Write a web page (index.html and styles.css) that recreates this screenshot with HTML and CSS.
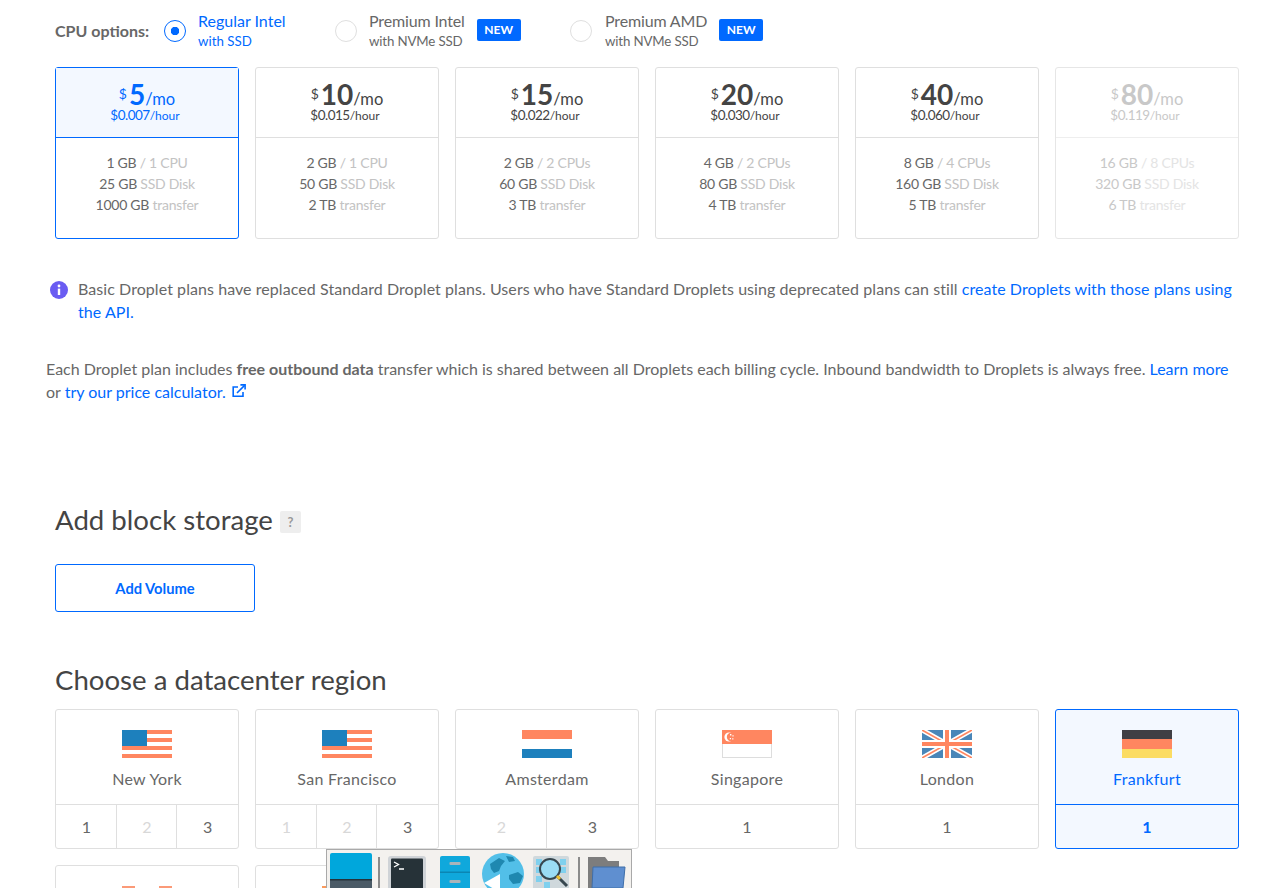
FILE: index.html
```html
<!DOCTYPE html>
<html>
<head>
    <title>Create Droplet</title>
    <link rel="stylesheet" href="styles.css">
</head>
<body>
    <div class="page">
        <div class="cpu-row">
            <span class="cpu-label">CPU options:</span>
            <div class="cpu-option cpu-regular selected">
                <span class="radio"></span>
                <span class="cpu-text">Regular Intel<small>with SSD</small></span>
            </div>
            <div class="cpu-option cpu-intel">
                <span class="radio"></span>
                <span class="cpu-text">Premium Intel<small>with NVMe SSD</small></span>
                <span class="badge-new">NEW</span>
            </div>
            <div class="cpu-option cpu-amd">
                <span class="radio"></span>
                <span class="cpu-text">Premium AMD<small>with NVMe SSD</small></span>
                <span class="badge-new">NEW</span>
            </div>
        </div>

        <div class="card-grid">
            <div class="plan selected">
                <div class="plan-price">
                    <div class="price"><sup>$</sup><b>5</b>/mo</div>
                    <div class="hourly">$0.007<small>/hour</small></div>
                </div>
                <div class="plan-specs">
                    <div>1 GB <i>/ 1 CPU</i></div>
                    <div>25 GB <i>SSD Disk</i></div>
                    <div>1000 GB <i>transfer</i></div>
                </div>
            </div>
            <div class="plan">
                <div class="plan-price">
                    <div class="price"><sup>$</sup><b>10</b>/mo</div>
                    <div class="hourly">$0.015<small>/hour</small></div>
                </div>
                <div class="plan-specs">
                    <div>2 GB <i>/ 1 CPU</i></div>
                    <div>50 GB <i>SSD Disk</i></div>
                    <div>2 TB <i>transfer</i></div>
                </div>
            </div>
            <div class="plan">
                <div class="plan-price">
                    <div class="price"><sup>$</sup><b>15</b>/mo</div>
                    <div class="hourly">$0.022<small>/hour</small></div>
                </div>
                <div class="plan-specs">
                    <div>2 GB <i>/ 2 CPUs</i></div>
                    <div>60 GB <i>SSD Disk</i></div>
                    <div>3 TB <i>transfer</i></div>
                </div>
            </div>
            <div class="plan">
                <div class="plan-price">
                    <div class="price"><sup>$</sup><b>20</b>/mo</div>
                    <div class="hourly">$0.030<small>/hour</small></div>
                </div>
                <div class="plan-specs">
                    <div>4 GB <i>/ 2 CPUs</i></div>
                    <div>80 GB <i>SSD Disk</i></div>
                    <div>4 TB <i>transfer</i></div>
                </div>
            </div>
            <div class="plan">
                <div class="plan-price">
                    <div class="price"><sup>$</sup><b>40</b>/mo</div>
                    <div class="hourly">$0.060<small>/hour</small></div>
                </div>
                <div class="plan-specs">
                    <div>8 GB <i>/ 4 CPUs</i></div>
                    <div>160 GB <i>SSD Disk</i></div>
                    <div>5 TB <i>transfer</i></div>
                </div>
            </div>
            <div class="plan disabled">
                <div class="plan-price">
                    <div class="price"><sup>$</sup><b>80</b>/mo</div>
                    <div class="hourly">$0.119<small>/hour</small></div>
                </div>
                <div class="plan-specs">
                    <div>16 GB <i>/ 8 CPUs</i></div>
                    <div>320 GB <i>SSD Disk</i></div>
                    <div>6 TB <i>transfer</i></div>
                </div>
            </div>
        </div>

        <div class="notice">
            <svg class="info-icon" viewBox="0 0 18 18" width="18" height="18">
                <circle cx="9" cy="9" r="9" fill="#6a5cf2"/>
                <circle cx="9" cy="5" r="1.4" fill="#fff"/>
                <rect x="7.8" y="7.6" width="2.4" height="6.4" fill="#fff"/>
            </svg>
            <p>Basic Droplet plans have replaced Standard Droplet plans. Users who have Standard Droplets using deprecated plans can still <a href="#">create Droplets with those plans using the API.</a></p>
        </div>

        <p class="note">Each Droplet plan includes <b>free outbound data</b> transfer which is shared between all Droplets each billing cycle. Inbound bandwidth to Droplets is always free. <a href="#">Learn more</a> or <a href="#">try our price calculator.</a>
            <svg class="ext-icon" viewBox="0 0 14 14" width="14" height="14" fill="none" stroke="#0069ff" stroke-width="1.6">
                <path d="M11 8v4.2H1.2V3H6"/>
                <path d="M5 9l7.6-7.6"/>
                <path d="M8.4 .9h4.7v4.7"/>
            </svg>
        </p>

        <h2 class="section-title storage-title">Add block storage <span class="help">?</span></h2>
        <button class="add-volume">Add Volume</button>

        <h2 class="section-title region-title">Choose a datacenter region</h2>
        <div class="card-grid regions">
            <div class="region">
                <div class="region-name">
                    <svg class="flag" viewBox="0 0 50 28">
                        <path fill="#ff8660" d="M0 0h50v4H0zM0 8h50v4H0zM0 16h50v4H0zM0 24h50v4H0z"/>
                        <rect width="25" height="16" fill="#1d80bd"/>
                    </svg>
                    New York
                </div>
                <div class="region-nums"><span>1</span><span class="off">2</span><span>3</span></div>
            </div>
            <div class="region">
                <div class="region-name">
                    <svg class="flag" viewBox="0 0 50 28">
                        <path fill="#ff8660" d="M0 0h50v4H0zM0 8h50v4H0zM0 16h50v4H0zM0 24h50v4H0z"/>
                        <rect width="25" height="16" fill="#1d80bd"/>
                    </svg>
                    San Francisco
                </div>
                <div class="region-nums"><span class="off">1</span><span class="off">2</span><span>3</span></div>
            </div>
            <div class="region">
                <div class="region-name">
                    <svg class="flag" viewBox="0 0 50 28">
                        <rect width="50" height="9" fill="#ff8660"/>
                        <rect y="19" width="50" height="9" fill="#1d80bd"/>
                    </svg>
                    Amsterdam
                </div>
                <div class="region-nums"><span class="off">2</span><span>3</span></div>
            </div>
            <div class="region">
                <div class="region-name">
                    <svg class="flag" viewBox="0 0 50 28">
                        <rect x=".5" y=".5" width="49" height="27" fill="#fff" stroke="#ddd"/>
                        <rect width="50" height="14" fill="#ff8660"/>
                        <circle cx="7" cy="7" r="4.6" fill="#fff"/>
                        <circle cx="9" cy="7" r="4.2" fill="#ff8660"/>
                        <path fill="#fff" d="M8 4h1.4v1.4H8zM10.400 5.200h1.200v1.200h-1.200zM7.800 8h1.200v1.200H7.800zM10.200 8.200h1.200v1.200h-1.200z"/>
                    </svg>
                    Singapore
                </div>
                <div class="region-nums"><span>1</span></div>
            </div>
            <div class="region">
                <div class="region-name">
                    <svg class="flag" viewBox="0 0 50 28">
                        <rect width="50" height="28" fill="#4a86b8"/>
                        <path stroke="#fff" stroke-width="5" d="M0 0l50 28M50 0L0 28"/>
                        <path stroke="#ff8660" stroke-width="1.600" d="M0 0l50 28M50 0L0 28"/>
                        <path stroke="#fff" stroke-width="8" d="M25 0v28M0 14h50"/>
                        <path stroke="#ff8660" stroke-width="4" d="M25 0v28M0 14h50"/>
                    </svg>
                    London
                </div>
                <div class="region-nums"><span>1</span></div>
            </div>
            <div class="region selected">
                <div class="region-name">
                    <svg class="flag" viewBox="0 0 50 28">
                        <rect width="50" height="9" fill="#403f44"/>
                        <rect y="9" width="50" height="10" fill="#ff8660"/>
                        <rect y="19" width="50" height="9" fill="#fbdc63"/>
                    </svg>
                    Frankfurt
                </div>
                <div class="region-nums"><span>1</span></div>
            </div>
            <div class="region">
                <div class="region-name">
                    <svg class="flag" viewBox="0 0 50 28">
                        <rect width="13" height="28" fill="#fb9a78"/>
                        <rect x="37" width="13" height="28" fill="#fb9a78"/>
                    </svg>
                </div>
            </div>
            <div class="region">
                <div class="region-name">
                    <svg class="flag" viewBox="0 0 50 28">
                        <rect width="50" height="9" fill="#fb9a5c"/>
                    </svg>
                </div>
            </div>
        </div>
    </div>

    <div class="dock">
        <svg class="dock-panel" width="42" height="36" viewBox="0 0 42 36">
            <rect width="42" height="36" rx="2" fill="#00a7dc"/>
            <rect y="27" width="42" height="9" fill="#4b5b67"/>
            <rect y="26" width="42" height="1.500" fill="#26323a"/>
        </svg>
        <span class="dock-sep sep-one"></span>
        <svg class="dock-term" width="38" height="34" viewBox="0 0 38 34">
            <rect width="38" height="34" rx="3" fill="#cfd3d7"/>
            <rect x="3" y="2.500" width="32" height="31" rx="1" fill="#263238"/>
            <path d="M6 6l4.500 2.500L6 11M11 13h5" fill="none" stroke="#fff" stroke-width="1.300"/>
        </svg>
        <svg class="dock-files" width="30" height="34" viewBox="0 0 30 34">
            <rect width="30" height="34" rx="2" fill="#0fa8dc"/>
            <rect y="15.500" width="30" height="1.500" fill="#0b86b3"/>
            <rect x="9.500" y="6" width="11" height="3" rx="1" fill="#a9b4ba"/>
            <rect x="9.500" y="24" width="11" height="3" rx="1" fill="#a9b4ba"/>
        </svg>
        <svg class="dock-globe" width="42" height="36" viewBox="0 0 42 36">
            <circle cx="21" cy="21" r="21" fill="#52bfe8"/>
            <path fill="#1f88b0" d="M8 11l9-6 6 3-4 5-2 5-5 2-3-4zM27 22l9-3 5 4-3 7-7 1-4-5zM24 3l7 1 2 4-6 1z"/>
            <path fill="#fff" d="M2 30l16-9v15h-6z"/>
        </svg>
        <svg class="dock-search" width="36" height="34" viewBox="0 0 36 34">
            <rect width="36" height="34" rx="2" fill="#cfd8dc"/>
            <path fill="#7fd0ee" d="M3 3h6v6H3zM27 3h6v6h-6zM27 11h6v6h-6zM3 11h6v6H3zM3 20h6v6H3zM11 26h6v6h-6z"/>
            <circle cx="17" cy="13" r="10" fill="#9adcf4" stroke="#37474f" stroke-width="2"/>
            <path d="M24 20l10 10" stroke="#37474f" stroke-width="3"/>
            <path d="M24 20l3 3" stroke="#f0c330" stroke-width="3"/>
        </svg>
        <span class="dock-sep sep-two"></span>
        <svg class="dock-folder" width="39" height="32" viewBox="0 0 39 32">
            <path fill="#7d7d7d" d="M1 1h17l3 4h11v27H1z"/>
            <path fill="#5f8fd0" stroke="#3f6ea8" d="M6 11h32l-2 21H5z"/>
        </svg>
    </div>
</body>
</html>
```

FILE: styles.css
```css
html {
    overflow: hidden;
}
body {
    font-family: "Lato", sans-serif;
    font-size: 16px;
    color: #676767;
    margin: 0;
    height: 888px;
    overflow: hidden;
    background-color: white;
}
a {
    color: #0069ff;
    text-decoration: none;
}
.page {
    height: 878px;
    overflow: hidden;
    padding: 10px 26px 0 55px;
}

/* cpu options */
.cpu-row {
    display: flex;
    align-items: center;
    height: 42px;
    margin-bottom: 15px;
}
.cpu-label {
    font-size: 16px;
    font-weight: 700;
    width: 109px;
    margin-top: -2px;
}
.cpu-option {
    display: flex;
    align-items: center;
}
.cpu-regular {
    width: 171px;
}
.cpu-intel {
    width: 235px;
}
.radio {
    width: 22px;
    height: 22px;
    box-sizing: border-box;
    border: 1px solid #dfdfdf;
    border-radius: 50%;
    margin-right: 12px;
}
.cpu-amd .radio {
    margin-right: 13px;
}
.cpu-option.selected .radio {
    border-color: #0069ff;
    background: radial-gradient(circle, #0069ff 0 4px, white 4.5px);
}
.cpu-text {
    font-size: 16px;
    line-height: 20px;
    white-space: nowrap;
}
.cpu-intel .cpu-text,
.cpu-amd .cpu-text {
    letter-spacing: -0.15px;
}
.cpu-text small {
    display: block;
    font-size: 13.3px;
}
.cpu-option.selected .cpu-text {
    color: #0069ff;
}
.badge-new {
    background-color: #0069ff;
    color: white;
    font-size: 12px;
    font-weight: 700;
    line-height: 22px;
    padding: 0 7.5px;
    border-radius: 2px;
    margin-left: 12px;
    margin-top: -2px;
}

/* plan and region cards */
.card-grid {
    display: grid;
    grid-template-columns: repeat(6, 184px);
    gap: 16px;
}
.plan {
    height: 172px;
    box-sizing: border-box;
    border: 1px solid #dfdfdf;
    border-radius: 3px;
    text-align: center;
}
.plan-price {
    height: 70px;
    box-sizing: border-box;
    padding-top: 23px;
    border-bottom: 1px solid #dfdfdf;
    color: #444;
}
.price {
    font-size: 16.5px;
    line-height: 16px;
}
.price sup {
    font-size: 14px;
    line-height: 0;
    margin-right: 2px;
    vertical-align: 6px;
}
.price b {
    font-size: 28px;
    font-weight: 700;
    line-height: 0;
}
.hourly {
    font-size: 13.5px;
    line-height: 16px;
    letter-spacing: -0.5px;
    padding-right: 4px;
}
.hourly small {
    font-size: 12px;
    letter-spacing: 0;
}
.plan-specs {
    padding-top: 14px;
    font-size: 14px;
    line-height: 21px;
    letter-spacing: -0.25px;
}
.plan-specs i {
    font-style: normal;
    color: #c3c3c3;
}
.plan.selected {
    border-color: #0069ff;
}
.plan.selected .plan-price {
    background-color: #f3f8ff;
    border-bottom-color: #0069ff;
    color: #0069ff;
}
.plan.disabled .plan-price,
.plan.disabled .plan-specs {
    color: #c8c8c8;
}
.plan.disabled .plan-specs i {
    color: #e4e4e4;
}
.plan.disabled {
    border-color: #e6e6e6;
}
.plan.disabled .plan-price {
    border-bottom-color: #eee;
}

/* text blocks */
.notice {
    display: flex;
    margin: 38px 0 0 -5px;
}
.info-icon {
    flex: none;
    margin: 4px 10px 0 0;
}
.notice p {
    margin: 0;
    line-height: 23px;
    letter-spacing: 0.065px;
}
.note {
    margin: 34px 0 0 -9px;
    line-height: 23px;
}
.note b {
    font-weight: 700;
}
.ext-icon {
    margin-left: 2px;
    vertical-align: 0;
}

/* sections */
.section-title {
    font-size: 27.6px;
    font-weight: 400;
    line-height: 34px;
    color: #444;
    margin: 0;
}
.storage-title {
    display: flex;
    align-items: center;
    gap: 7px;
    margin-top: 100px;
}
.help {
    width: 21px;
    height: 22px;
    margin-top: 3px;
    background-color: #eee;
    border-radius: 2px;
    color: #999;
    font-size: 13px;
    font-weight: 700;
    line-height: 22px;
    text-align: center;
}
.add-volume {
    display: block;
    width: 200px;
    height: 48px;
    margin-top: 27px;
    border: 1px solid #0069ff;
    border-radius: 3px;
    background-color: white;
    color: #0069ff;
    font-family: inherit;
    font-size: 14.7px;
    font-weight: 700;
}
.region-title {
    margin: 51px 0 12px;
}
.region {
    box-sizing: border-box;
    height: 140px;
    border: 1px solid #dfdfdf;
    border-radius: 3px;
    text-align: center;
}
.region-name {
    height: 94px;
    box-sizing: border-box;
    padding-top: 20px;
    line-height: 24px;
    letter-spacing: 0.3px;
}
.flag {
    display: block;
    width: 50px;
    height: 28px;
    margin: 0 auto 9px;
}
.region-nums {
    display: flex;
    height: 44px;
    border-top: 1px solid #dfdfdf;
    box-sizing: border-box;
}
.region-nums span {
    flex: 1;
    line-height: 43px;
    border-left: 1px solid #dfdfdf;
}
.region-nums span:first-child {
    border-left: none;
}
.region-nums span + span {
    margin-left: -1px;
}
.region-nums .off {
    color: #d8d8d8;
}
.region.selected {
    border-color: #0069ff;
    background-color: #f3f8ff;
    color: #0069ff;
}
.region.selected .region-nums {
    border-top-color: #0069ff;
    font-weight: 700;
}

/* desktop launcher over the page */
.dock {
    position: fixed;
    left: 326px;
    bottom: 0;
    width: 306px;
    height: 39px;
    box-sizing: border-box;
    display: flex;
    align-items: flex-start;
    padding: 3px 0 0 3px;
    background-color: #f3f1ee;
    border: 1px solid #a9a9a9;
    border-bottom: none;
    overflow: hidden;
}
.dock svg {
    flex: none;
}
.dock-sep {
    flex: none;
    width: 2px;
    height: 40px;
    margin-top: 4px;
    background-color: #8b8b8b;
}
.sep-one {
    margin-left: 6px;
}
.dock-term {
    margin: 3px 0 0 8px;
}
.dock-files {
    margin: 3px 0 0 14px;
}
.dock-globe {
    margin-left: 12px;
}
.dock-search {
    margin: 3px 0 0 9px;
}
.sep-two {
    margin-left: 9px;
}
.dock-folder {
    margin: 3px 0 0 7px;
}
```
